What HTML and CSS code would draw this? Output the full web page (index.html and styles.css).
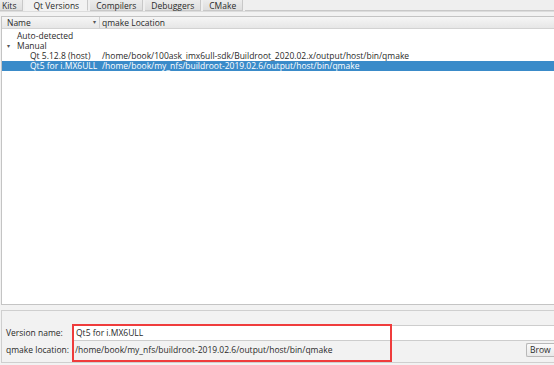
FILE: index.html
```html
<!DOCTYPE html>
<html lang="en">
<head>
  <meta charset="UTF-8">
  <title>Qt Versions</title>
  <link rel="stylesheet" href="styles.css">
</head>
<body>
  <div class="window">

    <!-- Tab bar -->
    <div class="tabs">
      <div class="tab">Kits</div>
      <div class="tab active">Qt Versions</div>
      <div class="tab">Compilers</div>
      <div class="tab">Debuggers</div>
      <div class="tab">CMake</div>
      <div class="tab-fill"></div>
    </div>

    <div class="pane">

      <!-- Versions tree -->
      <div class="tree">
        <div class="tree-head">
          <div class="col-name">Name <span class="sort">&#9662;</span></div>
          <div class="col-loc">qmake Location</div>
        </div>
        <div class="row"><div class="col-name lvl1">Auto-detected</div></div>
        <div class="row"><div class="col-name lvl1"><span class="arrow">&#9662;</span>Manual</div></div>
        <div class="row">
          <div class="col-name lvl2">Qt 5.12.8 (host)</div>
          <div class="col-loc">/home/book/100ask_imx6ull-sdk/Buildroot_2020.02.x/output/host/bin/qmake</div>
        </div>
        <div class="row selected">
          <div class="col-name lvl2">Qt5 for i.MX6ULL</div>
          <div class="col-loc">/home/book/my_nfs/buildroot-2019.02.6/output/host/bin/qmake</div>
        </div>
      </div>

      <!-- Details -->
      <div class="details">
        <div class="field">
          <label>Version name:</label>
          <div class="input">Qt5 for i.MX6ULL</div>
        </div>
        <div class="field">
          <label>qmake location:</label>
          <div class="path">/home/book/my_nfs/buildroot-2019.02.6/output/host/bin/qmake</div>
          <button class="browse">Brow</button>
        </div>
        <div class="highlight"></div>
      </div>

    </div>
  </div>
</body>
</html>
```

FILE: styles.css
```css
body {
  margin: 0;
  background: #f2f2f2;
  font-family: "Open Sans", "DejaVu Sans", sans-serif;
  font-size: 8.5px;
  color: #2a2a2a;
  overflow: hidden;
}

.window {
  width: 554px;
  height: 365px;
  display: flex;
  flex-direction: column;
}

/* Tabs */
.tabs {
  display: flex;
  height: 11px;
  background: #efefef;
}

.tab {
  padding: 0 6px;
  line-height: 11px;
  background: linear-gradient(#ececec, #dedede);
  border-right: 1px solid #c8c8c8;
  border-bottom: 1px solid #c8c8c8;
  margin-right: 2px;
}

.tab:first-child {
  padding: 0 6px 0 2px;
}

.tab.active {
  background: #f2f2f2;
  border-bottom-color: #f2f2f2;
  padding: 0 8px;
}

.tab-fill {
  flex: 1;
  border-bottom: 1px solid #c8c8c8;
}

.pane {
  flex: 1;
  display: flex;
  flex-direction: column;
  padding: 4px 0 2px 1px;
  border-top: 1px solid #dcdcdc;
}

/* Tree */
.tree {
  height: 287px;
  background: #fff;
  border: 1px solid #c4c4c4;
  border-right: none;
}

.tree-head {
  display: flex;
  height: 11px;
  line-height: 11px;
  background: linear-gradient(#f6f6f6, #e6e6e6);
  border-bottom: 1px solid #d2d2d2;
  margin-bottom: 2px;
}

.tree-head .col-name {
  padding-left: 5px;
  border-right: 1px solid #d0d0d0;
  position: relative;
}

.sort {
  position: absolute;
  right: 3px;
  font-size: 6px;
  color: #555;
}

.col-name {
  width: 98px;
  flex: none;
  box-sizing: border-box;
  white-space: nowrap;
}

.col-loc {
  padding-left: 2px;
  white-space: nowrap;
}

.row {
  display: flex;
  height: 10px;
  line-height: 10px;
}

.lvl1 {
  padding-left: 15px;
  position: relative;
}

.lvl2 {
  padding-left: 28px;
}

.arrow {
  position: absolute;
  left: 5px;
  font-size: 6px;
  color: #555;
}

.row.selected {
  background: #3a8bc9;
  color: #fff;
}

/* Details */
.details {
  margin-top: 5px;
  height: 53px;
  border: 1px solid #cfcfcf;
  border-right: none;
  box-sizing: border-box;
  padding: 13px 0 0 4px;
  position: relative;
  overflow: hidden;
}

.field {
  display: flex;
  align-items: center;
  height: 17px;
}

.field label {
  width: 67px;
  flex: none;
}

.input {
  flex: 1;
  height: 14px;
  line-height: 14px;
  background: #fff;
  border: 1px solid #cdcdcd;
  border-right: none;
  padding-left: 2px;
}

.path {
  flex: 1;
  padding-left: 2px;
}

.browse {
  font: inherit;
  color: #2a2a2a;
  height: 14px;
  width: 28px;
  padding: 0 0 0 3px;
  text-align: left;
  background: linear-gradient(#fafafa, #e9e9e9);
  border: 1px solid #b8b8b8;
  border-right: none;
  border-radius: 2px 0 0 2px;
}

.highlight {
  position: absolute;
  left: 70px;
  top: 13px;
  width: 320px;
  height: 38px;
  border: 2px solid #ef3c3c;
  box-sizing: border-box;
}
```
